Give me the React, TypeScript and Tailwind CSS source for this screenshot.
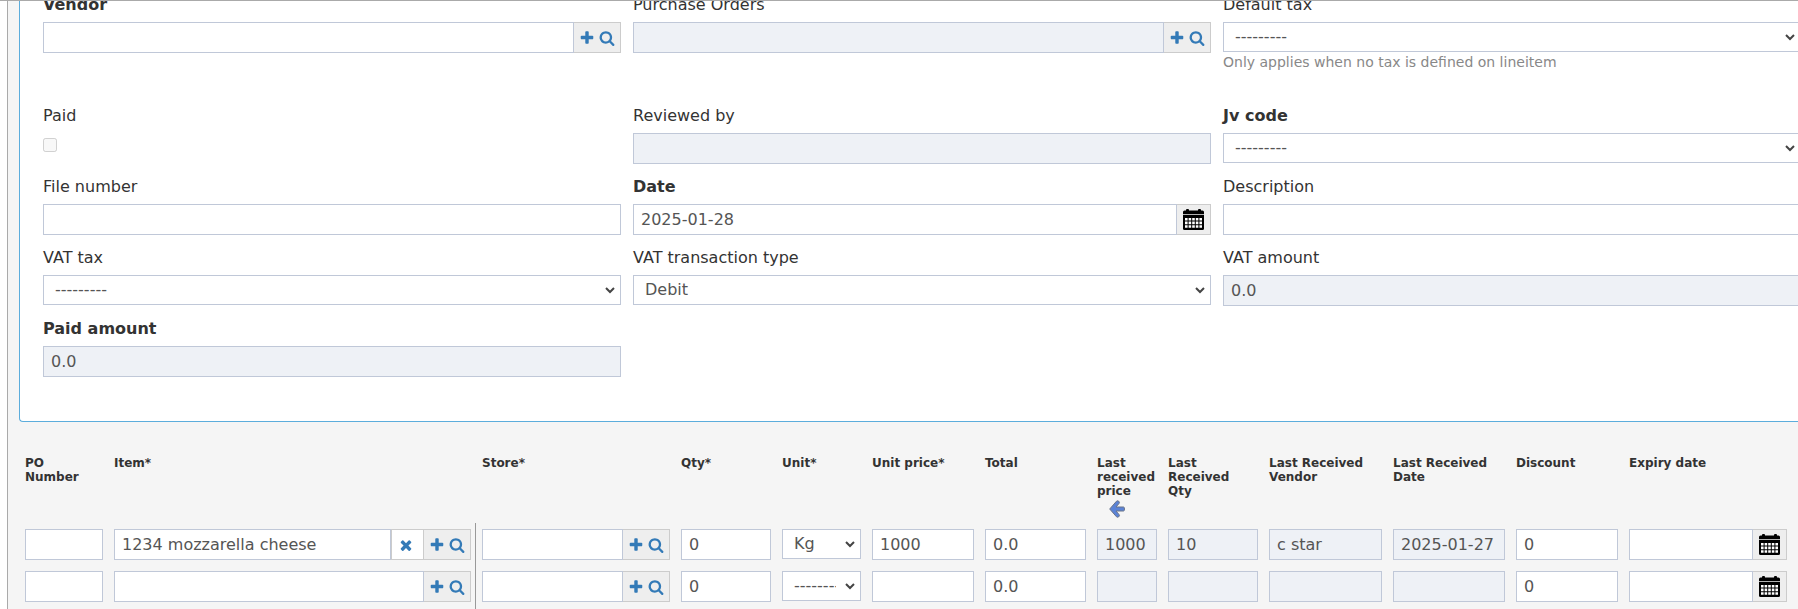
import type { ReactNode } from "react";

const control = "border border-[#c0c8d8] text-base text-[#555]";

function Icon({ d }: { d: string }) {
  return (
    <svg viewBox="0 0 1792 1792" className="size-4 fill-[#337ab7]" aria-hidden="true">
      <path d={d} />
    </svg>
  );
}

const PLUS =
  "M1600 736v192q0 40-28 68t-68 28h-416v416q0 40-28 68t-68 28H800q-40 0-68-28t-28-68v-416H288q-40 0-68-28t-28-68V736q0-40 28-68t68-28h416V224q0-40 28-68t68-28h192q40 0 68 28t28 68v416h416q40 0 68 28t28 68z";
const SEARCH =
  "M1216 832q0-185-131.5-316.5T768 384 451.5 515.5 320 832t131.5 316.5T768 1280t316.5-131.5T1216 832zm512 832q0 52-38 90t-90 38q-54 0-90-38l-343-342q-179 124-399 124-143 0-273.5-55.5t-225-150-150-225T64 832t55.5-273.5 150-225 225-150T768 128t273.5 55.5 225 150 150 225T1472 832q0 220-124 399l343 343q37 37 37 90z";
const TIMES =
  "M1490 1322q0 40-28 68l-136 136q-28 28-68 28t-68-28l-294-294-294 294q-28 28-68 28t-68-28l-136-136q-28-28-28-68t28-68l294-294-294-294q-28-28-28-68t28-68l136-136q28-28 68-28t68 28l294 294 294-294q28-28 68-28t68 28l136 136q28 28 28 68t-28 68l-294 294 294 294q28 28 28 68z";

function CalendarIcon() {
  return (
    <svg viewBox="0 0 21 21" className="size-[21px]" aria-hidden="true">
      <rect x="3" y="0" width="3" height="4" rx="1" />
      <rect x="15" y="0" width="3" height="4" rx="1" />
      <path d="M1.500 1.500h18A1.500 1.500 0 0 1 21 3v2.300H0V3A1.500 1.500 0 0 1 1.500 1.500z" />
      <path d="M0 6h21V19.500a1.500 1.500 0 0 1-1.500 1.500h-18A1.500 1.500 0 0 1 0 19.500z" />
      <path
        className="fill-white"
        d="M2 9h2.600v2.600H2zM5.600 9h2.600v2.600H5.600zM9.200 9h2.600v2.600H9.200zM12.800 9h2.600v2.600h-2.600zM16.400 9H19v2.600h-2.600zM2 12.600h2.600v2.600H2zM5.600 12.600h2.600v2.600H5.600zM9.200 12.600h2.600v2.600H9.200zM12.800 12.600h2.600v2.600h-2.600zM16.400 12.600H19v2.600h-2.600zM2 16.200h2.600v2.600H2zM5.600 16.200h2.600v2.600H5.600zM9.200 16.200h2.600v2.600H9.200zM12.800 16.200h2.600v2.600h-2.600zM16.400 16.200H19v2.600h-2.600z"
      />
    </svg>
  );
}

function ArrowIcon() {
  return (
    <svg viewBox="0 0 16 18" className="mt-0.5 ml-3 h-[18px] w-4" aria-hidden="true">
      <path
        d="M.7 9 7.500 1.200Q8.500.300 9.700 1.200T10 3.500L7 7h7.500q1 0 1 2t-1 2H7l3 3.500q1 1.400-.3 2.300t-2.200 0z"
        className="fill-[#5b83d6] stroke-[#6b7488]"
      />
    </svg>
  );
}

function TextInput({ id, label, value = "", locked }: { id: string; label?: string; value?: string; locked?: boolean }) {
  return (
    <input
      id={id}
      type="text"
      aria-label={label}
      defaultValue={value}
      readOnly={locked}
      className={`${control} h-[31px] w-full min-w-0 flex-1 rounded-none px-[7px] ${locked ? "bg-[#eef1f6]" : "bg-white"}`}
    />
  );
}

function Select({ id, label, value = "---------" }: { id: string; label?: string; value?: string }) {
  return (
    <div className="relative">
      <select id={id} aria-label={label} className={`${control} block h-[30px] w-full appearance-none rounded-none bg-white pr-6 pl-[11px]`}>
        <option>{value}</option>
      </select>
      <svg viewBox="0 0 10 7" className="pointer-events-none absolute top-3 right-1.5 h-[7px] w-2.5" aria-hidden="true">
        <path d="M1 1l4 4 4-4" className="fill-none stroke-[#444] stroke-2" />
      </svg>
    </div>
  );
}

// text box followed by the add / search addon
function Lookup({ clear, ...props }: { id: string; label?: string; value?: string; locked?: boolean; clear?: boolean }) {
  return (
    <div className="flex">
      <TextInput {...props} />
      {clear && (
        <button type="button" aria-label="Clear" className="flex w-8 items-center justify-center border border-r-0 border-[#ccc] bg-white pr-1">
          <Icon d={TIMES} />
        </button>
      )}
      <div
        className={`flex items-center justify-center gap-1 border border-[#ccc] bg-[#eee] ${clear ? "w-12" : "w-[47px] border-l-0"}`}
      >
        <button type="button" aria-label="Add">
          <Icon d={PLUS} />
        </button>
        <button type="button" aria-label="Search">
          <Icon d={SEARCH} />
        </button>
      </div>
    </div>
  );
}

function DateInput(props: { id: string; label?: string; value?: string }) {
  return (
    <div className="flex">
      <TextInput {...props} />
      <button
        type="button"
        aria-label="Pick a date"
        className="flex w-[34px] items-center justify-center border border-l-0 border-[#ccc] bg-[#eee]"
      >
        <CalendarIcon />
      </button>
    </div>
  );
}

function Field({ id, label, bold, help, children }: { id: string; label: string; bold?: boolean; help?: string; children: ReactNode }) {
  return (
    <div className="pb-[11px]">
      <label htmlFor={id} className={`mb-[5px] block leading-6 ${bold ? "font-bold" : ""}`}>
        {label}
      </label>
      {children}
      {help && <p className="mb-[21px] text-sm text-[#888]">{help}</p>}
    </div>
  );
}

const columns = [
  { title: "PO\nNumber", width: "w-[89px]" },
  { title: "Item*", width: "w-[362px]" },
  { title: "Store*", width: "w-[205px]" },
  { title: "Qty*", width: "w-[101px]" },
  { title: "Unit*", width: "w-[90px]" },
  { title: "Unit price*", width: "w-[113px]" },
  { title: "Total", width: "w-[112px]" },
  { title: "Last received price", width: "w-[71px]" },
  { title: "Last\nReceived\nQty", width: "w-[101px]" },
  { title: "Last Received Vendor", width: "w-[124px]" },
  { title: "Last Received Date", width: "w-[123px]" },
  { title: "Discount", width: "w-[113px]" },
  { title: "Expiry date", width: "w-[169px]" },
];

const lines = [
  { item: "1234 mozzarella cheese", unit: "Kg", price: "1000", lastPrice: "1000", lastQty: "10", vendor: "c star", lastDate: "2025-01-27" },
  { item: "", unit: "---------", price: "", lastPrice: "", lastQty: "", vendor: "", lastDate: "" },
];

function LineItems() {
  const cell = "pt-1.5 pb-[5px] pr-[11px] align-top";
  return (
    <table className="w-full table-fixed border-separate border-spacing-0">
      <colgroup>
        {columns.map((c) => (
          <col key={c.title} className={c.width} />
        ))}
      </colgroup>
      <thead>
        <tr className="h-[67px] text-left align-top text-xs leading-[14px]">
          {columns.map((c) => (
            <th key={c.title} className={`pr-[11px] font-bold whitespace-pre-line ${c.title === "Store*" ? "pl-1.5" : ""}`}>
              {c.title}
              {c.title === "Last received price" && <ArrowIcon />}
            </th>
          ))}
        </tr>
      </thead>
      <tbody>
        {lines.map((line, i) => (
          <tr key={i} className="last:h-12">
            <td className={cell}><TextInput id={`po-${i}`} label="PO Number" /></td>
            <td className="border-r border-[#999] pt-1.5 pr-1 pb-[5px] align-top">
              <Lookup id={`item-${i}`} label="Item" value={line.item} clear={line.item !== ""} />
            </td>
            <td className={`${cell} pl-1.5`}><Lookup id={`store-${i}`} label="Store" /></td>
            <td className={cell}><TextInput id={`qty-${i}`} label="Qty" value="0" /></td>
            <td className={cell}><Select id={`unit-${i}`} label="Unit" value={line.unit} /></td>
            <td className={cell}><TextInput id={`price-${i}`} label="Unit price" value={line.price} /></td>
            <td className={cell}><TextInput id={`total-${i}`} label="Total" value="0.0" /></td>
            <td className={cell}><TextInput id={`lprice-${i}`} label="Last received price" value={line.lastPrice} locked /></td>
            <td className={cell}><TextInput id={`lqty-${i}`} label="Last received qty" value={line.lastQty} locked /></td>
            <td className={cell}><TextInput id={`lvendor-${i}`} label="Last received vendor" value={line.vendor} locked /></td>
            <td className={cell}><TextInput id={`ldate-${i}`} label="Last received date" value={line.lastDate} locked /></td>
            <td className={cell}><TextInput id={`discount-${i}`} label="Discount" value="0" /></td>
            <td className={cell}><DateInput id={`expiry-${i}`} label="Expiry date" /></td>
          </tr>
        ))}
      </tbody>
    </table>
  );
}

function App() {
  return (
    <div className="flex min-h-screen flex-col overflow-hidden border-t border-[#aaa] bg-white pl-[7px] font-['DejaVu_Sans',Verdana,sans-serif] text-base text-[#333]">
      <form className="flex-1 border-l border-[#aaa] bg-[#f5f5f5] pl-[11px]">
        <section className="-mt-2 rounded-bl-sm border-b border-l border-[#5caddc] bg-white pb-[33px] pl-[23px]">
          <div className="-mr-[3px] grid grid-cols-3 gap-x-3">
            <Field id="vendor" label="Vendor" bold>
              <Lookup id="vendor" />
            </Field>
            <Field id="orders" label="Purchase Orders">
              <Lookup id="orders" locked />
            </Field>
            <Field id="tax" label="Default tax" help="Only applies when no tax is defined on lineitem">
              <Select id="tax" />
            </Field>
            <Field id="paid" label="Paid">
              <input id="paid" type="checkbox" disabled className="mt-2.5 block size-3.5" />
            </Field>
            <Field id="reviewed" label="Reviewed by">
              <TextInput id="reviewed" locked />
            </Field>
            <Field id="jv" label="Jv code" bold>
              <Select id="jv" />
            </Field>
            <Field id="file" label="File number">
              <TextInput id="file" />
            </Field>
            <Field id="date" label="Date" bold>
              <DateInput id="date" value="2025-01-28" />
            </Field>
            <Field id="description" label="Description">
              <TextInput id="description" />
            </Field>
            <Field id="vat" label="VAT tax">
              <Select id="vat" />
            </Field>
            <Field id="vat-type" label="VAT transaction type">
              <Select id="vat-type" value="Debit" />
            </Field>
            <Field id="vat-amount" label="VAT amount">
              <TextInput id="vat-amount" value="0.0" locked />
            </Field>
            <Field id="paid-amount" label="Paid amount" bold>
              <TextInput id="paid-amount" value="0.0" locked />
            </Field>
          </div>
        </section>
        <div className="pt-[34px] pl-1.5">
          <LineItems />
        </div>
      </form>
    </div>
  );
}

export default App;
